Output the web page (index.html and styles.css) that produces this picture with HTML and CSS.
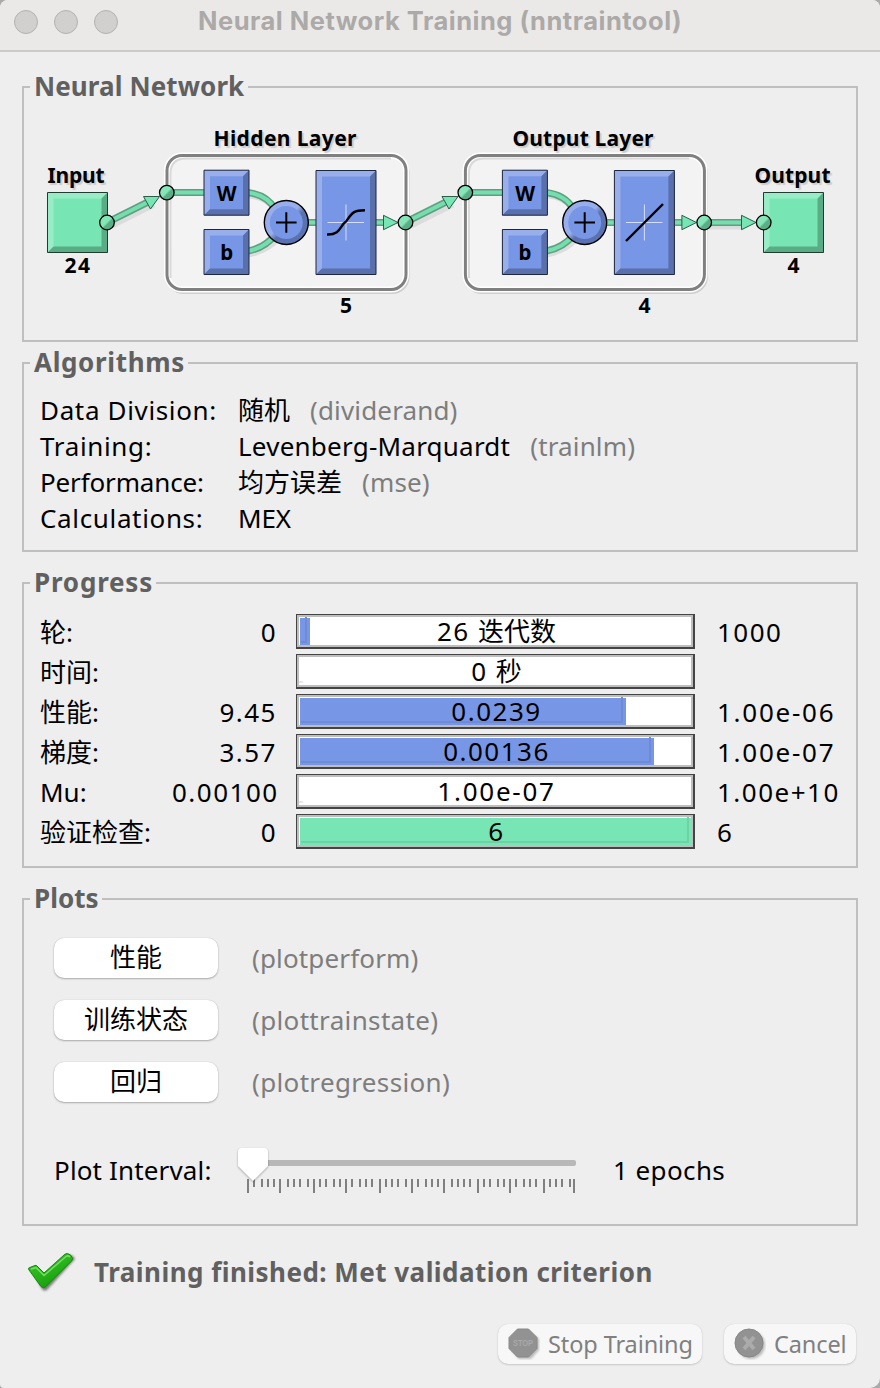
FILE: index.html
```html
<!DOCTYPE html>
<html lang="zh-CN">
<head>
<meta charset="utf-8">
<title>Neural Network Training (nntraintool)</title>
<link rel="stylesheet" href="styles.css">
</head>
<body>
<main class="window">
  <header class="titlebar">
    <div class="lights"><i></i><i></i><i></i></div>
    <h1 class="title">Neural Network Training (nntraintool)</h1>
  </header>

  <fieldset class="group network">
    <legend class="lg-network">Neural Network</legend>
    <svg class="diagram" width="832" height="200" viewBox="24 120 832 200">
      <defs>
        <filter id="soft" x="-20%" y="-50%" width="150%" height="200%"><feGaussianBlur stdDeviation="0.9"/></filter>
        <linearGradient id="ball" x1="0" y1="0" x2="1" y2="1">
          <stop offset="0.48" stop-color="#86e6b8"/><stop offset="0.58" stop-color="#5aae86"/>
        </linearGradient>
        <linearGradient id="rim" x1="0" y1="0" x2="1" y2="1">
          <stop offset="0.46" stop-color="#98adec"/><stop offset="0.56" stop-color="#5a72b0"/>
        </linearGradient>
        <g id="node"><circle r="7.3" fill="url(#ball)" stroke="#000" stroke-width="1.3"/></g>
        <g id="terminal">
          <path d="M0 0H60V60H0Z" fill="#78e6b4"/>
          <path d="M0 0H60L54 6H6V54L0 60Z" fill="#99edc6"/>
          <path d="M60 0V60H0L6 54H54V6Z" fill="#59ac86"/>
          <path d="M0 0H60V60H0Z" fill="none" stroke="#1f3c2f"/>
        </g>
        <g id="weight">
          <path d="M0 0H45V45H0Z" fill="#7896e6"/>
          <path d="M0 0H45L39 6H6V39L0 45Z" fill="#99afec"/>
          <path d="M45 0V45H0L6 39H39V6Z" fill="#5a70ac"/>
          <path d="M0 0H45V45H0Z" fill="none" stroke="#1f273c"/>
        </g>
        <g id="transfer">
          <path d="M0 0H60V104H0Z" fill="#7896e6"/>
          <path d="M0 0H60L54 6H6V98L0 104Z" fill="#99afec"/>
          <path d="M60 0V104H0L6 98H54V6Z" fill="#5a70ac"/>
          <path d="M0 0H60V104H0Z" fill="none" stroke="#1f273c"/>
          <path d="M11.500 52H48M30 34V70" fill="none" stroke="#d5def8" stroke-width="1"/>
        </g>
        <g id="layer">
          <rect x="168.500" y="158" width="239" height="134" rx="15" class="frame-shadow"/>
          <rect x="167" y="155.500" width="239" height="134" rx="15" fill="#f3f3f3" stroke="#fff" stroke-width="6"/>
          <path d="M170.500 278V174Q170.500 158.500 186 158.500H391" fill="none" stroke="#d9d9d9" stroke-width="2"/>
          <rect x="167" y="155.500" width="239" height="134" rx="15" fill="none" stroke="#808080" stroke-width="3"/>
          <path class="cable-shadow" d="M248 196Q268 197 277 213M248 255Q268 251 277 240"/>
          <path class="cable-edge" d="M170 192.500H204M248 192.500Q267 195 275 209M248 251Q265 248 276 234M305 222.500H317M376 222.500H385"/>
          <path class="cable-core" d="M170 192.500H204M248 192.500Q267 195 275 209M248 251Q265 248 276 234M305 222.500H317M376 222.500H385"/>
          <use href="#weight" x="204" y="170.200"/>
          <use href="#weight" x="204" y="229.500"/>
          <circle cx="286.300" cy="222.500" r="22" fill="url(#rim)" stroke="#000" stroke-width="1.400"/>
          <circle cx="286.300" cy="222.500" r="16.500" fill="#7896e6"/>
          <path d="M276 222.500H296.600M286.300 212.300V232.700" stroke="#000" stroke-width="2"/>
          <use href="#transfer" x="316" y="170.500"/>
          <path class="arrow" d="M383.500 215.300L398 222.500L383.500 229.700Z"/>
          <text x="226.700" y="200.500" class="sym">W</text>
          <text x="226.700" y="259.500" class="sym">b</text>
        </g>
      </defs>

      <use href="#layer"/>
      <use href="#layer" x="298.400"/>
      <path d="M327 234.500C341 235 340 225 346 221.500C352 213 353 210.300 365 210.300" class="curve"/>
      <path d="M626 241L663 204" class="curve"/>
      <use href="#terminal" x="47.500" y="192.500"/>
      <use href="#terminal" x="763.500" y="192.500"/>

      <path class="cable-shadow" d="M112 226L154 205M411 226L453 205M709 227H744"/>
      <path class="cable-edge" d="M109 221.500L152 200M407 221.500L450 200M706 222.500H744"/>
      <path class="cable-core" d="M109 221.500L152 200M407 221.500L450 200M706 222.500H744"/>
      <path class="arrow" d="M143.500 196.500L159.500 196.500L150.500 209Z"/>
      <path class="arrow" d="M442 196.500L458 196.500L449 209Z"/>
      <path class="arrow" d="M741.500 215.300L756 222.500L741.500 229.700Z"/>
      <use href="#node" x="107" y="222.500"/><use href="#node" x="166.800" y="192.600"/>
      <use href="#node" x="405.500" y="222.500"/><use href="#node" x="465.300" y="192.600"/>
      <use href="#node" x="704.200" y="222.500"/><use href="#node" x="763.700" y="222.500"/>

      <g class="caption">
        <text x="47.500" y="183" textLength="57">Input</text>
        <text x="213.500" y="146" textLength="143">Hidden Layer</text>
        <text x="512.500" y="146" textLength="141">Output Layer</text>
        <text x="754.500" y="183" textLength="76">Output</text>
        <text x="64.500" y="272.500" textLength="25.500" class="plain">24</text>
        <text x="340" y="312.500" class="plain">5</text>
        <text x="638.500" y="312.500" class="plain">4</text>
        <text x="787.500" y="272.500" class="plain">4</text>
      </g>
    </svg>
  </fieldset>

  <fieldset class="group algorithms">
    <legend class="lg-algorithms">Algorithms</legend>
    <dl class="facts">
      <dt class="wide">Data Division:</dt><dd>随机<span class="hint">(dividerand)</span></dd>
      <dt class="wide">Training:</dt><dd><span class="method">Levenberg-Marquardt</span><span class="hint">(trainlm)</span></dd>
      <dt class="tight">Performance:</dt><dd>均方误差<span class="hint">(mse)</span></dd>
      <dt class="wide">Calculations:</dt><dd class="tight">MEX</dd>
    </dl>
  </fieldset>

  <fieldset class="group progress">
    <legend class="lg-progress">Progress</legend>
    <div class="row"><span>轮:</span><span class="num start">0</span><div class="bar"><div class="fill" style="width:10px"></div><span class="num">26 <span class="cjk">迭代数</span></span></div><span class="num">1000</span></div>
    <div class="row"><span>时间:</span><span class="num start"></span><div class="bar empty"><span class="num">0 <span class="cjk">秒</span></span></div><span class="num"></span></div>
    <div class="row"><span>性能:</span><span class="num start">9.45</span><div class="bar"><div class="fill" style="width:326px"></div><span class="num">0.0239</span></div><span class="num power">1.00e-06</span></div>
    <div class="row"><span>梯度:</span><span class="num start">3.57</span><div class="bar"><div class="fill" style="width:354px"></div><span class="num">0.00136</span></div><span class="num power">1.00e-07</span></div>
    <div class="row"><span>Mu:</span><span class="num start">0.00100</span><div class="bar empty"><span class="num power">1.00e-07</span></div><span class="num">1.00e+10</span></div>
    <div class="row"><span>验证检查:</span><span class="num start">0</span><div class="bar"><div class="fill done" style="width:392px"></div><span class="num">6</span></div><span class="num">6</span></div>
  </fieldset>

  <fieldset class="group plots">
    <legend class="lg-plots">Plots</legend>
    <div class="plot"><button class="push">性能</button><span class="hint">(plotperform)</span></div>
    <div class="plot"><button class="push">训练状态</button><span class="hint loose">(plottrainstate)</span></div>
    <div class="plot"><button class="push">回归</button><span class="hint loose">(plotregression)</span></div>
    <div class="interval">
      <span class="interval-label">Plot Interval:</span>
      <svg class="slider" width="346" height="52" viewBox="234 1144 346 52">
        <rect x="250" y="1160" width="326" height="6" rx="2" fill="#b8b8b8"/>
        <path shape-rendering="crispEdges" stroke="#808080" stroke-width="2" fill="none" d="M248 1179v14M254 1179v8M262 1179v8M268 1179v8M274 1179v8M280 1179v14M288 1179v8M294 1179v8M300 1179v8M308 1179v8M314 1179v14M320 1179v8M326 1179v8M334 1179v8M340 1179v8M346 1179v14M352 1179v8M360 1179v8M366 1179v8M372 1179v8M380 1179v14M386 1179v8M392 1179v8M398 1179v8M406 1179v8M412 1179v14M418 1179v8M426 1179v8M432 1179v8M438 1179v8M444 1179v14M452 1179v8M458 1179v8M464 1179v8M470 1179v8M478 1179v14M484 1179v8M490 1179v8M498 1179v8M504 1179v8M510 1179v14M516 1179v8M524 1179v8M530 1179v8M536 1179v8M544 1179v14M550 1179v8M556 1179v8M562 1179v8M570 1179v8M574 1179v14"/>
        <path class="thumb" d="M242 1148H264Q268 1148 268 1152V1166L253 1181L238 1166V1152Q238 1148 242 1148Z"/>
      </svg>
      <span class="epochs">1 epochs</span>
    </div>
  </fieldset>

  <div class="status">
    <svg width="52" height="44" viewBox="26 1250 52 44">
      <defs><linearGradient id="tick" x1="0" y1="0" x2="0.6" y2="1"><stop offset="0" stop-color="#3fd02d"/><stop offset="1" stop-color="#169c0b"/></linearGradient></defs>
      <path filter="url(#soft)" opacity=".55" d="M31 1270L36 1267L45 1275L67 1256Q72 1253 75 1259L47 1290Q44 1292 42 1289Z" fill="#222"/>
      <path d="M29 1270Q27 1268 31 1267L35 1265.500Q36 1265 37 1266L44 1273L64 1255Q67 1252 71 1255.500Q74 1259 71.500 1261L46 1286.500Q43.500 1289 41 1286.500Z" fill="url(#tick)" stroke="#128a0b" stroke-width="1"/>
      <path d="M31 1269L36 1267.500L44 1275.500L66 1256.500Q68 1255 70 1257" fill="none" stroke="#8be57a" stroke-width="1.500" opacity=".8"/>
    </svg>
    <strong>Training finished: Met validation criterion</strong>
  </div>

  <footer class="actions">
    <button class="action stop" disabled>
      <svg width="32" height="32" viewBox="0 0 32 32">
        <path filter="url(#soft)" d="M11 3H21L31 11V22L23 31H11L3 22Z" fill="#bbb"/>
        <path d="M9.500 1H20.500L29 9.500V20.500L20.500 29H9.500L1 20.500V9.500Z" fill="#929292" stroke="#898989"/>
        <text x="15" y="18" class="stop-text" textLength="20" lengthAdjust="spacingAndGlyphs">STOP</text>
      </svg>
      <span>Stop Training</span>
    </button>
    <button class="action cancel" disabled>
      <svg width="32" height="32" viewBox="0 0 32 32">
        <circle filter="url(#soft)" cx="17" cy="17" r="14" fill="#bbb"/>
        <circle cx="15" cy="15" r="14" fill="#929292" stroke="#868686"/>
        <path d="M10 9L20 21M20 9L10 21" stroke="#ababab" stroke-width="4" fill="none"/>
      </svg>
      <span>Cancel</span>
    </button>
  </footer>
</main>
</body>
</html>
```

FILE: styles.css
```css
* { box-sizing: border-box; }
html { background: #aaa; }
body {
  margin: 0;
  font: 26px/36px "Noto Sans", "Noto Sans CJK SC", sans-serif;
  color: #000;
}
.window {
  width: 880px;
  height: 1388px;
  background: #eee;
  border-radius: 8px 8px 10px 4px;
  overflow: hidden;
}
.titlebar {
  height: 52px;
  border-bottom: 2px solid #cbcaca;
  background: #ebe9e7;
  display: flex;
  padding: 10px 14px;
}
.lights { display: flex; gap: 16px; }
.lights i {
  width: 24px;
  height: 24px;
  border-radius: 50%;
  background: #d1d0ce;
  border: 1px solid #b3b2b0;
}
.title {
  margin: -4px 0 0 80px;
  font: 700 25.500px/30px Inter, sans-serif;
  letter-spacing: .5px;
  color: #abaaa8;
  white-space: nowrap;
}

.group {
  margin: 0 22px;
  padding: 0 6px;
  border: 2px solid #bfbfbf;
  min-width: 0;
}
.group legend {
  height: 32px;
  padding: 0 4px;
  line-height: 30px;
  font-weight: 700;
  color: #606060;
  white-space: nowrap;
}
.group .lg-network { width: 218px; letter-spacing: .1px; }
.group .lg-algorithms { width: 158px; letter-spacing: .65px; }
.group .lg-progress { width: 126px; letter-spacing: .8px; }
.group .lg-plots { width: 72px; }
.network { margin-top: 19px; height: 271px; }
.algorithms { margin-top: 5px; height: 205px; }
.progress { margin-top: 15px; height: 301px; }
.plots { margin-top: 15px; height: 343px; }

.diagram { display: block; margin: 17px 0 0 -6px; }
.frame-shadow { fill: none; stroke: #cfcfcf; stroke-width: 4; }
.cable-shadow { fill: none; stroke: #dcdcdc; stroke-width: 5; }
.cable-edge { fill: none; stroke: #5f9f80; stroke-width: 7; }
.cable-core { fill: none; stroke: #74deae; stroke-width: 4; }
.arrow { fill: #78e6b4; stroke: #2e5c48; stroke-width: 1; }
.curve { fill: none; stroke: #000; stroke-width: 2.4; }
.sym { font: 700 20.5px "Noto Sans", sans-serif; text-anchor: middle; }
.caption { font: 700 21px "Noto Sans", sans-serif; text-shadow: 2px 2px 1px #ccc; }
.plain { text-shadow: none; }

.facts {
  margin: 13px 0 0 10px;
  display: grid;
  grid-template-columns: 198px 1fr;
  grid-auto-rows: 36px;
}
.facts dd { margin: 0; white-space: nowrap; }
.wide { letter-spacing: .65px; }
.tight { letter-spacing: -.15px; }
.method { letter-spacing: .23px; }
.hint { color: #7d7d7d; letter-spacing: .15px; }
.hint.loose { letter-spacing: .35px; }
.facts .hint { margin-left: 20px; }

.progress .row:first-of-type { margin-top: 13px; }
.row {
  height: 40px;
  line-height: 40px;
  margin-left: 10px;
  display: grid;
  grid-template-columns: 132px 105px 19px 399px 22px 1fr;
}
.row > :nth-child(3) { grid-column: 4; }
.row > :nth-child(4) { grid-column: 6; }
.num { letter-spacing: 1.5px; white-space: nowrap; }
.power { letter-spacing: 1.75px; }
.cjk { letter-spacing: 0; }
.start { text-align: right; }
.bar {
  position: relative;
  height: 35px;
  margin-top: 2px;
  border: solid #444;
  border-width: 1px 2px 2px 1px;
  background: #fff;
  box-shadow: inset 0 0 0 2px #bebebe;
  display: flex;
  justify-content: center;
}
.bar .num { position: relative; line-height: 32px; padding-left: 3px; }
.fill {
  position: absolute;
  left: 3px;
  top: 3px;
  height: 27px;
  background: #7896e6;
}
.fill::after {
  content: "";
  position: absolute;
  left: 1px;
  top: -1px;
  right: 3px;
  bottom: 2px;
  border: solid #6f8bd5;
  border-width: 0 2px 2px 0;
}
.fill.done { background: #78e6b4; }
.fill.done::after { border-color: #6dd3a5; }
.bar.empty::after {
  content: "";
  position: absolute;
  left: 2px;
  bottom: 4px;
  width: 4px;
  height: 2px;
  background: #e8e8e8;
}

.plot {
  height: 62px;
  margin-left: 24px;
  display: flex;
  align-items: center;
  gap: 34px;
}
.plots .plot:first-of-type { margin-top: 12px; }
.push, .action {
  border: 0;
  padding: 0;
  font: inherit;
  color: #000;
  background: #fff;
  border-radius: 10px;
  box-shadow: 0 1px 2px rgba(0, 0, 0, .28), 0 0 1px rgba(0, 0, 0, .2);
}
.push { width: 164px; height: 40px; line-height: 36px; padding-bottom: 2px; }
.interval {
  margin: 31px 0 0 24px;
  height: 52px;
  line-height: 52px;
  display: grid;
  grid-template-columns: 180px 379px 1fr;
}
.interval-label { letter-spacing: .15px; }
.epochs { letter-spacing: .4px; }
.slider { display: block; }
.thumb { fill: #fff; filter: drop-shadow(0 1px 1px rgba(0, 0, 0, .3)); }

.status {
  margin: 24px 0 0 26px;
  height: 44px;
  line-height: 44px;
  display: flex;
  gap: 16px;
  color: #606060;
  letter-spacing: .47px;
}
.actions {
  margin: 30px 24px 0 0;
  display: flex;
  justify-content: flex-end;
  gap: 22px;
}
.action {
  height: 40px;
  background: #f7f7f7;
  color: #808080;
  font-size: 23.500px;
  line-height: 40px;
  display: flex;
  gap: 8px;
  padding: 4px 0 0 10px;
  letter-spacing: -.1px;
  white-space: nowrap;
  box-shadow: 0 1px 2px rgba(0, 0, 0, .15), 0 0 1px rgba(0, 0, 0, .15);
}
.action span { line-height: 32px; }
.stop { width: 204px; }
.cancel { width: 132px; }
.stop-text { font: 700 9px "Liberation Sans", sans-serif; fill: #a9a9a9; text-anchor: middle; letter-spacing: 0; }
```
